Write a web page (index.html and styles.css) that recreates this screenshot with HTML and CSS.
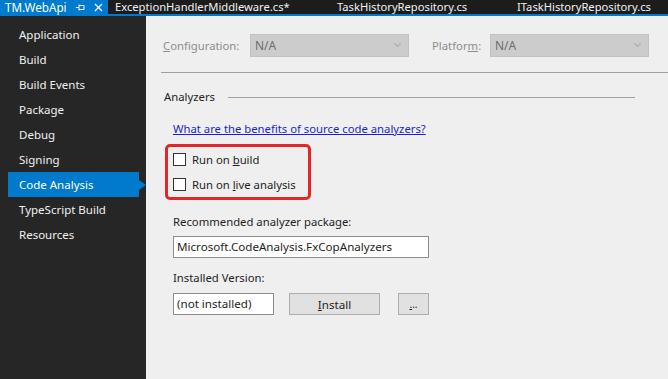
FILE: index.html
```html
<!DOCTYPE html>
<html lang="en">
<head>
    <meta charset="UTF-8">
    <title>TM.WebApi - Code Analysis</title>
    <link rel="stylesheet" href="styles.css">
</head>
<body>
    <!-- 标签栏 -->
    <div class="tabbar">
        <div class="tab active">
            <span class="tab-name">TM.WebApi</span>
            <svg class="pin" width="9" height="9" viewBox="0 0 9 9">
                <path d="M0 4.5h3M3 1.5v6M3 2.5h5M3 6.5h5M8 2.5v4" stroke="#fff" stroke-width="1" fill="none"/>
            </svg>
            <svg class="close" width="9" height="9" viewBox="0 0 9 9">
                <path d="M1 1l7 7M8 1l-7 7" stroke="#fff" stroke-width="1.3"/>
            </svg>
        </div>
        <div class="tab tab-1">ExceptionHandlerMiddleware.cs*</div>
        <div class="tab tab-2">TaskHistoryRepository.cs</div>
        <div class="tab tab-3">ITaskHistoryRepository.cs</div>
    </div>

    <div class="layout">
        <!-- 左侧菜单 -->
        <ul class="sidebar">
            <li>Application</li>
            <li>Build</li>
            <li>Build Events</li>
            <li>Package</li>
            <li>Debug</li>
            <li>Signing</li>
            <li class="selected">Code Analysis</li>
            <li>TypeScript Build</li>
            <li>Resources</li>
        </ul>

        <!-- 主区域 -->
        <div class="main">
            <div class="config-row">
                <span class="dim-label"><u>C</u>onfiguration:</span>
                <div class="combo combo-config"><span>N/A</span><i class="chev"></i></div>
                <span class="dim-label platform-label">Platfor<u>m</u>:</span>
                <div class="combo"><span>N/A</span><i class="chev"></i></div>
            </div>

            <div class="separator"></div>

            <div class="section-head">
                <span>Analyzers</span>
                <div class="section-line"></div>
            </div>

            <div class="section-body">
                <a class="link">What are the benefits of source code analyzers?</a>

                <div class="highlight">
                    <label class="check-row"><span class="checkbox"></span><span>Run on <u>b</u>uild</span></label>
                    <label class="check-row"><span class="checkbox"></span><span>Run on <u>l</u>ive analysis</span></label>
                </div>

                <div class="field-label">Recommended analyzer package:</div>
                <div class="textbox package-box">Microsoft.CodeAnalysis.FxCopAnalyzers</div>

                <div class="field-label version-label">Installed Version:</div>
                <div class="install-row">
                    <div class="textbox version-box">(not installed)</div>
                    <button class="btn install-btn"><u>I</u>nstall</button>
                    <button class="btn more-btn"><u>.</u>..</button>
                </div>
            </div>
        </div>
    </div>
</body>
</html>
```

FILE: styles.css
```css
* {
    margin: 0;
    padding: 0;
    box-sizing: border-box;
}

html, body {
    width: 668px;
    height: 379px;
    overflow: hidden;
}

body {
    background: #efefef;
    font-family: "Noto Sans", "Open Sans", sans-serif;
    font-size: 11.3px;
    color: #1e1e1e;
    display: flex;
    flex-direction: column;
}

/* 标签栏 */
.tabbar {
    height: 16px;
    background: #1c1c1c;
    border-bottom: 2px solid #007acc;
    display: flex;
    color: #f1f1f1;
    line-height: 14px;
    white-space: nowrap;
    font-size: 11.2px;
}

.tab {
    height: 14px;
}

.tab.active {
    width: 108px;
    background: #007acc;
    color: #fff;
    padding-left: 5px;
    display: flex;
    align-items: center;
    font-size: 11.7px;
}

.tab-name {
    width: 71px;
    line-height: 14px;
}

.pin {
    margin-right: 9px;
}

.tab-1 {
    padding-left: 7px;
    width: 229px;
}

.tab-2 {
    width: 180px;
}

/* 布局 */
.layout {
    flex: 1;
    display: flex;
}

.sidebar {
    width: 146px;
    background: #262626;
    list-style: none;
    padding-top: 6px;
    color: #f1f1f1;
    font-size: 11.5px;
}

.sidebar li {
    height: 25px;
    line-height: 25px;
    margin-left: 8px;
    width: 131px;
    padding-left: 11px;
    position: relative;
}

.sidebar li.selected {
    background: #007acc;
    color: #fff;
}

.sidebar li.selected::after {
    content: "";
    position: absolute;
    right: -7px;
    top: 8px;
    border-left: 7px solid #007acc;
    border-top: 5px solid transparent;
    border-bottom: 5px solid transparent;
}

.main {
    flex: 1;
    padding: 18px 0 0 15px;
}

/* 配置行 */
.config-row {
    display: flex;
    align-items: center;
    padding-left: 2px;
    height: 23px;
}

.dim-label {
    color: #8d8d8d;
    width: 87px;
}

.platform-label {
    width: 58px;
    margin-left: 23px;
}

.combo {
    width: 159px;
    height: 23px;
    background: #cccccc;
    border: 1px solid #c2c2c2;
    color: #6f6f6f;
    display: flex;
    align-items: center;
    padding-left: 4px;
    font-size: 12px;
    position: relative;
}

.chev {
    position: absolute;
    right: 8px;
    top: 6px;
    width: 5px;
    height: 5px;
    border-right: 1px solid #a8a8a8;
    border-bottom: 1px solid #a8a8a8;
    transform: rotate(45deg);
}

.separator {
    height: 1px;
    background: #a0a0a0;
    margin-top: 15px;
}

/* 分析器 */
.section-head {
    margin-top: 16px;
    padding-left: 3px;
    display: flex;
    align-items: center;
    line-height: 16px;
}

.section-line {
    width: 407px;
    height: 1px;
    background: #a0a0a0;
    margin-left: 13px;
}

.section-body {
    padding-left: 12px;
    line-height: 16px;
}

.link {
    display: block;
    margin-top: 16px;
    color: #1f1fd2;
    text-decoration: underline;
}

.highlight {
    margin: 7px 0 0 -8px;
    width: 146px;
    height: 56px;
    border: 3px solid #e3262a;
    border-radius: 5px;
    padding-left: 5px;
}

.check-row {
    display: flex;
    align-items: center;
    height: 25px;
}

.checkbox {
    width: 13px;
    height: 13px;
    border: 1px solid #333;
    background: #fff;
    margin-right: 6px;
}

.field-label {
    margin-top: 14px;
}

.version-label {
    margin-top: 12px;
}

.textbox {
    background: #fff;
    border: 1px solid #8c8c8c;
    height: 22px;
    line-height: 20px;
    padding-left: 3px;
    font-size: 11.6px;
}

.package-box {
    width: 256px;
    margin-top: 6px;
}

.install-row {
    display: flex;
    margin-top: 7px;
}

.version-box {
    width: 101px;
}

.btn {
    height: 22px;
    background: #e1e1e1;
    border: 1px solid #adadad;
    font-family: inherit;
    font-size: 11.6px;
    color: #1e1e1e;
}

.install-btn {
    width: 91px;
    margin-left: 15px;
}

.more-btn {
    width: 31px;
    margin-left: 18px;
    font-size: 10px;
}
```
